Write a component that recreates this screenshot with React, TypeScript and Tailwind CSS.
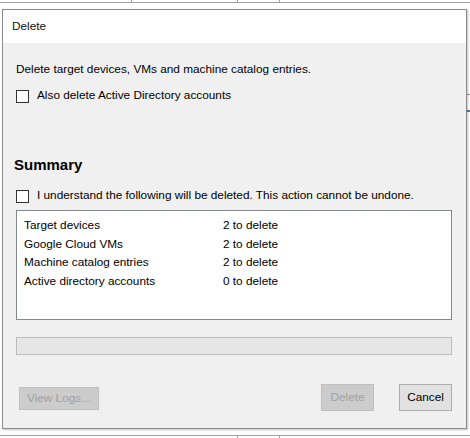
import React from "react";

const rows = [
  { label: "Target devices", count: "2 to delete" },
  { label: "Google Cloud VMs", count: "2 to delete" },
  { label: "Machine catalog entries", count: "2 to delete" },
  { label: "Active directory accounts", count: "0 to delete" },
];

function CheckBox({ label }: { label: string }) {
  return (
    <label className="flex h-[16px] items-center gap-[8px]">
      <span className="h-[13px] w-[13px] border border-[#333333] bg-white" />
      <span>{label}</span>
    </label>
  );
}

export default function App() {
  return (
    <div className="relative h-[438px] w-[470px] overflow-hidden bg-white font-['Liberation_Sans',sans-serif] text-[11.8px] text-black">
      {/* app behind the dialog */}
      <div className="absolute left-0 top-[2px] h-px w-full bg-[#a0a0a0]" />
      <div className="absolute left-[131px] top-0 h-[3px] w-px bg-[#a0a0a0]" />
      <div className="absolute left-[237px] top-0 h-[3px] w-px bg-[#a0a0a0]" />
      <div className="absolute left-[279px] top-0 h-[3px] w-px bg-[#a0a0a0]" />
      <div className="absolute bottom-[2px] left-0 h-px w-full bg-[#a0a0a0]" />
      <div className="absolute bottom-0 left-[237px] h-[2px] w-px bg-[#a0a0a0]" />
      <div className="absolute bottom-0 left-[279px] h-[2px] w-px bg-[#a0a0a0]" />
      <div className="absolute right-0 top-[94px] h-px w-[4px] bg-[#909090]" />
      <div className="absolute right-0 top-[110px] h-[2px] w-[4px] bg-[#4a7fc0]" />

      {/* dialog */}
      <div className="absolute left-[2px] top-[9px] flex h-[420px] w-[465px] flex-col border border-[#8a8a8a] bg-[#f0f0f0] shadow-[1px_1px_2px_rgba(0,0,0,0.25)]">
        <div className="flex h-[33px] items-center bg-white px-[9px] text-[#111]">Delete</div>

        <div className="flex flex-1 flex-col pl-[13px] pr-[14px]">
          <p className="mt-[18px] leading-[16px]">Delete target devices, VMs and machine catalog entries.</p>
          <div className="mt-[11px]">
            <CheckBox label="Also delete Active Directory accounts" />
          </div>

          <h2 className="-ml-[2px] mt-[52px] text-[15px] font-bold leading-[18px]">Summary</h2>
          <div className="mt-[14px]">
            <CheckBox label="I understand the following will be deleted. This action cannot be undone." />
          </div>

          <div className="mt-[6px] h-[110px] border border-[#828790] bg-white px-[7px] pt-[5px]">
            {rows.map((r) => (
              <div key={r.label} className="grid grid-cols-[199px_1fr] leading-[18.6px]">
                <span>{r.label}</span>
                <span>{r.count}</span>
              </div>
            ))}
          </div>

          <div className="mt-[17px] h-[18px] border border-[#bcbcbc] bg-[#e6e6e6]" />

          <div className="mt-[29px] flex items-end">
            <button className="mb-px ml-[3px] h-[23px] w-[80px] border border-[#bfbfbf] bg-[#cccccc] text-[#a0a0a0]">
              View Logs...
            </button>
            <button className="ml-auto h-[27px] w-[53px] border border-[#bfbfbf] bg-[#cccccc] text-[#a0a0a0]">
              Delete
            </button>
            <button className="ml-[25px] h-[27px] w-[53px] border border-[#adadad] bg-[#e1e1e1]">Cancel</button>
          </div>
        </div>
      </div>
    </div>
  );
}
